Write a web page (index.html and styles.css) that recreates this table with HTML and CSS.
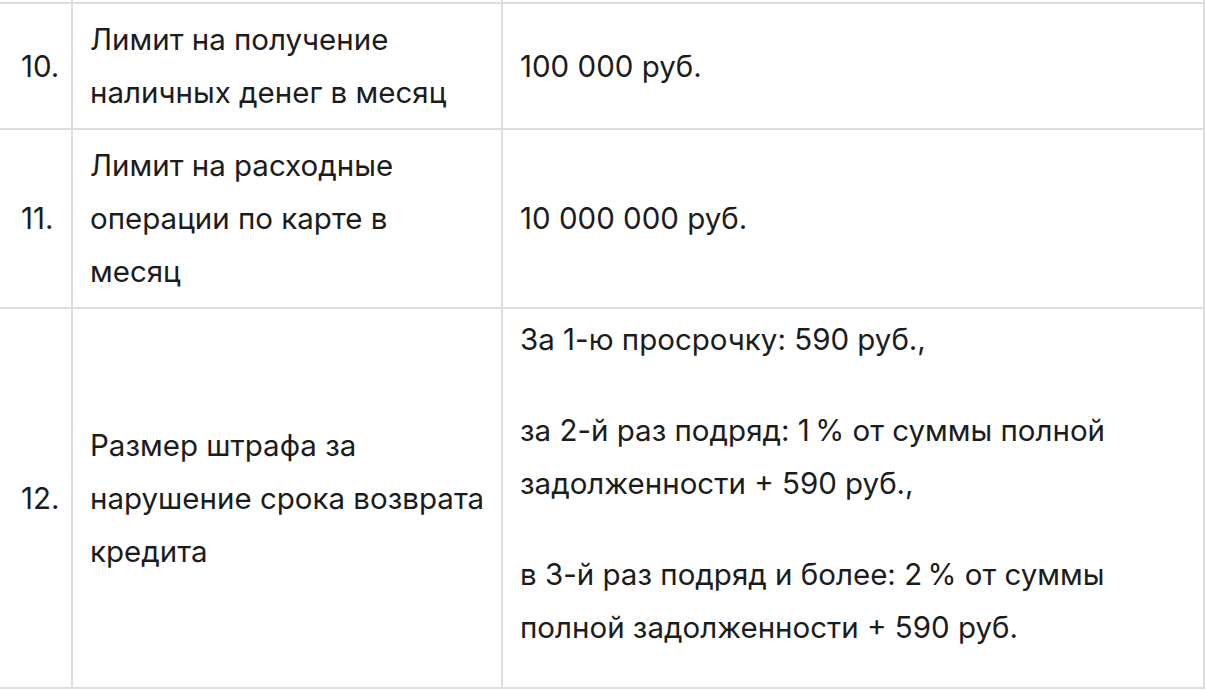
FILE: index.html
```html
<!DOCTYPE html>
<html lang="ru">
<head>
<meta charset="utf-8">
<link rel="stylesheet" href="styles.css">
</head>
<body>
<table class="terms">
  <colgroup>
    <col class="c-num">
    <col class="c-label">
    <col class="c-value">
  </colgroup>
  <tr class="spacer"><td></td><td></td><td></td></tr>
  <tr class="row-10">
    <td class="num">10.</td>
    <td class="label">Лимит на получение<br>наличных денег в месяц</td>
    <td class="value">100 000 руб.</td>
  </tr>
  <tr class="row-11">
    <td class="num">11.</td>
    <td class="label">Лимит на расходные<br>операции по карте в<br>месяц</td>
    <td class="value">10 000 000 руб.</td>
  </tr>
  <tr class="row-12">
    <td class="num">12.</td>
    <td class="label">Размер штрафа за<br>нарушение срока возврата<br>кредита</td>
    <td class="value multi">
      <p>За 1-ю просрочку: 590 руб.,</p>
      <p>за 2-й раз подряд: 1&#8239;% от суммы полной<br>задолженности + 590 руб.,</p>
      <p>в 3-й раз подряд и более: 2&#8239;% от суммы<br>полной задолженности + 590 руб.</p>
    </td>
  </tr>
</table>
</body>
</html>
```

FILE: styles.css
```css
html, body {
  margin: 0;
  padding: 0;
  background: #ffffff;
}

body {
  font-family: "Inter", "Roboto", "Noto Sans", sans-serif;
  color: #1c1c1c;
  font-size: 29.5px;
  line-height: 53px;
}

.terms {
  border-collapse: collapse;
  table-layout: fixed;
  width: 1204px;
}

.c-num { width: 72px; }
.c-label { width: 430px; }
.c-value { width: 702px; }

.terms td {
  border: 2px solid #dedede;
  padding: 9px 6px 9px 17px;
  vertical-align: middle;
  white-space: nowrap;
}

.terms td:first-child {
  border-left: none;
}

.spacer td {
  height: 2px;
  padding: 0;
  border-top: none;
  line-height: 0;
}

.terms td.num {
  padding-left: 21px;
  padding-right: 2px;
}

.row-10 td { height: 106px; }
.row-11 td { height: 159px; }

.value.multi {
  vertical-align: top;
  padding-top: 4px;
  padding-bottom: 33px;
}

.value.multi p {
  margin: 0 0 38px;
}

.value.multi p:last-child {
  margin-bottom: 0;
}
```
